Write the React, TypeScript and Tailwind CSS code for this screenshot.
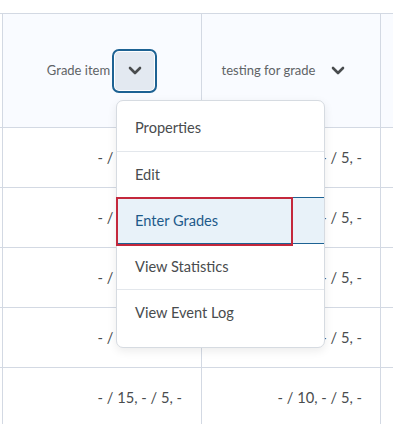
import React from "react";

function Chevron() {
  return (
    <svg width="14" height="9" viewBox="0 0 14 9" fill="none">
      <path d="M2 2l5 5 5-5" stroke="#494c4e" strokeWidth="2.6" strokeLinecap="round" strokeLinejoin="round" />
    </svg>
  );
}

const rows = Array.from({ length: 5 });

export default function App() {
  return (
    <div className="relative w-[393px] h-[424px] overflow-hidden bg-white" style={{ fontFamily: "Lato, 'Noto Sans', sans-serif" }}>
      <div className="h-[13px]" />
      <div className="border-t border-[#d3d9e3]">
        {/* header */}
        <div className="flex h-[114px] border-b border-[#d3d9e3]">
          <div className="w-[3px] shrink-0 border-r border-[#d3d9e3] bg-white" />
          <div className="w-[199px] shrink-0 border-r border-[#d3d9e3] bg-[#f9fbff] flex items-center justify-center gap-[2px]">
            <span className="text-[13px] text-[#5f6366]">Grade item</span>
            <button className="w-[45px] h-[44px] rounded-[7px] border-2 border-[#1d6293] bg-[#e3e9f1] flex items-center justify-center shadow-[inset_0_0_0_1px_#ffffff]">
              <Chevron />
            </button>
          </div>
          <div className="w-[179px] shrink-0 border-r border-[#d3d9e3] bg-[#f9fbff] flex items-center justify-center gap-[1px]">
            <span className="text-[13px] text-[#5f6366]">testing for grade</span>
            <span className="w-[44px] h-[44px] flex items-center justify-center">
              <Chevron />
            </span>
          </div>
          <div className="flex-1 bg-[#f9fbff]" />
        </div>
        {rows.map((_, i) => (
          <div key={i} className="flex h-[60px] border-b border-[#d3d9e3]">
            <div className="w-[3px] shrink-0 border-r border-[#d3d9e3]" />
            <div className="w-[199px] shrink-0 border-r border-[#d3d9e3] flex items-center justify-end pr-[19px] text-[14.7px] text-[#494c4e]">
              - / 15, - / 5, -
            </div>
            <div className="w-[179px] shrink-0 border-r border-[#d3d9e3] flex items-center justify-end pr-[18px] text-[14.7px] text-[#494c4e]">
              - / 10, - / 5, -
            </div>
            <div className="flex-1" />
          </div>
        ))}
      </div>

      {/* dropdown menu */}
      <div className="absolute left-[116px] top-[100px] w-[209px] h-[248px] bg-white border border-[#d6dbe1] rounded-[7px] shadow-[0_3px_10px_rgba(0,0,0,0.08)] pt-[4px]">
        <div className="h-[47px] border-b border-[#e3e7ec] flex items-center pl-[18px] text-[14.6px] text-[#494c4e]">Properties</div>
        <div className="h-[45px] flex items-center pl-[18px] text-[14.6px] text-[#494c4e]">Edit</div>
        <div className="relative h-[47px] border-y border-[#1d6293] bg-[#e8f2f9] flex items-center pl-[18px] text-[14.6px] text-[#1d5a8a]">
          Enter Grades
          <div className="absolute left-[-1px] top-[-1px] w-[177px] h-[49px] border-2 border-[#c4283c]" />
        </div>
        <div className="h-[46px] border-b border-[#e3e7ec] flex items-center pl-[18px] text-[14.6px] text-[#494c4e]">View Statistics</div>
        <div className="h-[45px] flex items-center pl-[18px] text-[14.6px] text-[#494c4e]">View Event Log</div>
      </div>
    </div>
  );
}
